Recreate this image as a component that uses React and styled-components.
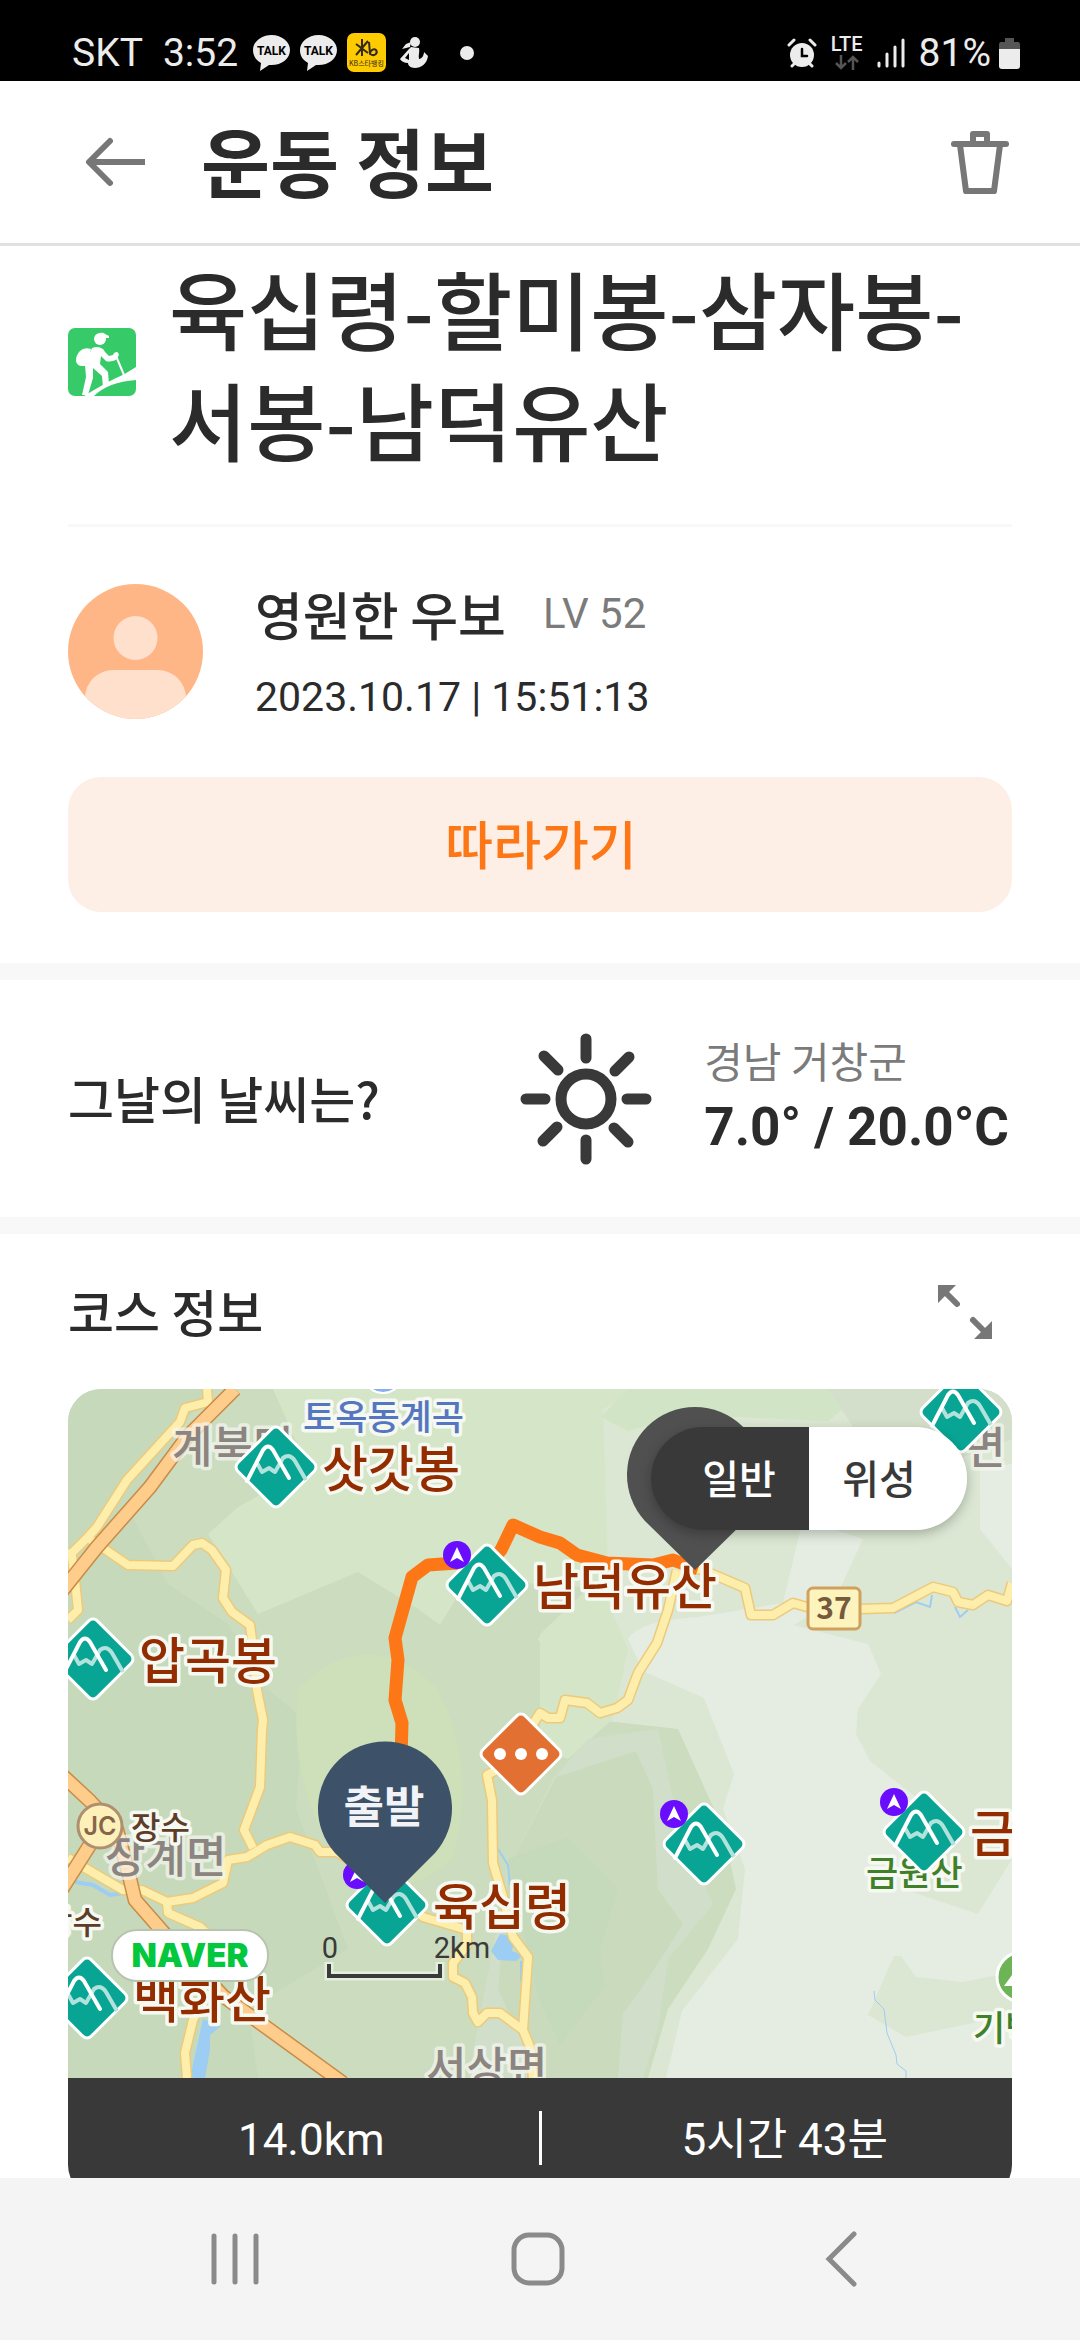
import React, { useState } from 'react';
import styled, { createGlobalStyle } from 'styled-components';

const peaks = [
    { x: 208, y: 78, name: '삿갓봉' },
    { x: 25, y: 270, name: '압곡봉' },
    { x: 419, y: 196, name: '남덕유산', flag: true },
    { x: 893, y: 23 },
    { x: 319, y: 516, name: '육십령', flag: true },
    { x: 19, y: 609, name: '백화산' },
    { x: 636, y: 455, flag: true },
    { x: 856, y: 443, name: '금원산', flag: true },
];

const localRoads = [
    '139,0 140,13 117,19 112,33 59,91 29,138 19,149 0,168',
    '3,160 7,191 10,221 0,231',
    '20,149 35,159 60,176 105,177 125,156 134,154 144,161 158,181 155,209 164,223 182,236 185,258 189,301 195,331 194,341 192,398 176,441 185,459',
    '0,469 55,501 74,501 99,513 125,509 155,494 160,471 179,468 199,456 222,448 247,456 252,463 269,463 310,490 355,528 399,541 399,556 385,574 385,588 397,594 404,608 405,624 410,633 419,624 432,624 455,641 462,658 465,689',
    '99,513 100,524 132,538 145,550 140,600 125,631 117,664 119,689',
    '609,181 600,221 589,254 570,284 560,311 549,319 532,324 519,314 497,311 492,329 480,329 472,324 440,375 419,386 424,411 425,474 435,508 445,548 460,568 455,641',
    '620,178 635,181 677,199 683,226 705,226 725,214 739,218 792,220 825,219 865,198 885,203 890,213 905,216 920,206 939,212 944,194',
];

const highways = [
    '167,0 119,48 82,98 29,158 -6,202',
    '-6,386 22,412 49,441 62,490 67,511 95,543 155,607 275,694',
    '-6,500 25,451',
];

const route = '333,370 334,334 327,311 330,271 327,249 344,188 360,176 389,174 418,178 433,161 445,136 472,148 492,154 509,166 539,174 585,176 605,171 630,180';

function StatusBar() {
    return (
        <Status>
            <StatusGroup>
                <span>SKT</span>
                <span>3:52</span>
            </StatusGroup>
            <StatusIcons>
                <TalkIcon />
                <TalkIcon />
                <svg width="39" height="39" viewBox="0 0 39 39">
                    <rect width="39" height="39" rx="7" fill="#fecb00" />
                    <path d="M9 11l12 9M21 8L9 22M15 6v17M22 9l1 12c5 3 8-1 6-4-2-2-5 0-6 3" stroke="#33291c" strokeWidth="2" fill="none" />
                    <text x="19.5" y="33" textAnchor="middle" fontSize="7" fontFamily="Noto Sans CJK KR" fill="#33291c">KB스타뱅킹</text>
                </svg>
                <svg width="32" height="32" viewBox="-4 0 32 32" fill="#ececec">
                    <circle cx="15" cy="5" r="5" />
                    <path d="M11 5L6 7l-4 5 8-2z" />
                    <path d="M11 10l8 1c1 4-1 7 0 11 3 0 5-4 5-7l4 4c-1 8-7 12-13 12-5 0-7-3-7-5-4 0-7-2-8-4l9-10z" />
                    <path d="M9 16l-4 5 4 2z" fill="#000" />
                </svg>
            </StatusIcons>
            <Dot />
            <StatusRight>
                <svg width="30" height="30" viewBox="0 0 30 30" fill="none" stroke="#ececec" strokeWidth="3" strokeLinecap="round">
                    <circle cx="15" cy="17" r="12" fill="#ececec" stroke="none" />
                    <path d="M2 7l5-5M28 7l-5-5M5 28l3-3M25 28l-3-3" />
                    <path d="M15 11v7h5" stroke="#000" strokeWidth="2.5" />
                </svg>
                <Lte>
                    LTE
                    <svg width="24" height="15" viewBox="0 0 24 15" fill="none" stroke="#555" strokeWidth="2.5">
                        <path d="M6 0v13M1 8l5 5 5-5M18 15V2M13 7l5-5 5 5" />
                    </svg>
                </Lte>
                <svg width="28" height="30" viewBox="0 0 28 30" stroke="#ececec" strokeWidth="3" strokeLinecap="round">
                    <path d="M2 25v3M10 16v12M18 9v19M26 2v26" />
                </svg>
                <span>81%</span>
                <svg width="21" height="32" viewBox="0 0 21 32">
                    <path d="M6 1h9v4h4q2 0 2 3v4H0V8q0-3 2-3h4z" fill="#555" />
                    <path d="M0 12h21v17q0 3-3 3H3q-3 0-3-3z" fill="#ececec" />
                </svg>
            </StatusRight>
        </Status>
    );
}

function TalkIcon() {
    return (
        <svg width="37" height="36" viewBox="0 0 37 36">
            <path d="M18.500 0C8 0 0 7 0 15c0 6 3 10 8 13L7 36l9-6C28 31 37 24 37 15 37 7 29 0 18.500 0z" fill="#ececec" />
            <text x="18.500" y="20" textAnchor="middle" fontSize="12" fontWeight="700" fontFamily="Roboto, sans-serif">TALK</text>
        </svg>
    );
}

function Peak({ x, y, flag }) {
    return (
        <g transform={`translate(${x} ${y})`}>
            <rect x="-30" y="-30" width="60" height="60" rx="6" transform="rotate(45)" fill="#08a595" stroke="#fff" strokeWidth="3" />
            <path d="M-19-4L-14 5-7 1-1 5 7-9Q14-14 19-6L30 13" fill="none" stroke="#b2e2dc" strokeWidth="4" strokeLinejoin="round" />
            <path d="M-29 14L-13-17Q-8-24-3-17L13 11" fill="none" stroke="#fff" strokeWidth="4" strokeLinecap="round" />
            {flag && (
                <g transform="translate(-30 -30)">
                    <circle r="14" fill="#6a0dff" />
                    <path d="M0-8L7 7 0 3-7 7z" fill="#fff" />
                </g>
            )}
        </g>
    );
}

function CourseMap() {
    return (
        <MapCanvas viewBox="0 0 944 689" preserveAspectRatio="xMidYMid slice">
            <rect width="944" height="689" fill="#cbdcbf" />
            <path d="M0 0H140L60 120 100 195 160 235 200 300 235 330 228 420 280 560 180 620 190 689H0z" fill="#c6dabb" />
            <path d="M205 0H580L540 200 400 190 372 236 350 220 290 183 190 225 140 145 170 118 240 80z" fill="#d4e5c8" />
            <path d="M230 300Q300 230 370 300Q410 380 385 470Q330 520 270 470Q220 400 230 300z" fill="#cde0ba" />
            <path d="M535 20L570 0H944V689H580L600 620 640 560 668 500 655 440 610 340 520 330 470 250 540 180z" fill="#dbe7d3" />
            <path d="M533 28L560 0H800L760 32 620 26 560 42z" fill="#d1e4c5" />
            <path d="M472 245L530 190 560 260 545 330 500 370 472 360z" fill="#d4e5c8" />
            <path d="M520 350L590 340 605 410 625 470 645 515 600 570 590 640 575 689H400L440 480 485 390z" fill="#d1dfca" />
            <path d="M488 388L568 362 585 400 590 500 615 535 580 590 555 625 550 689H470L430 600 440 480z" fill="#cadbbd" />
            <path d="M440 470L500 448 550 500 532 560 536 598 492 656 470 608z" fill="#c5dabb" />
            <path d="M760 0H944V50L890 70 800 60z" fill="#d3dfcb" />
            <path d="M560 250Q570 232 630 228L715 214 735 130 795 150 765 215 725 236 800 255 813 285 790 320 788 345 802 372 850 410 835 500 910 525 944 470V689H598L614 622 670 550 677 480 655 420 666 385 636 309 575 282z" fill="#e5ede2" />
            <path d="M912 80L944 75V180L912 140z" fill="#e5ede2" />
            <path d="M826 567H833L848 588 895 593 944 583V626L838 648 800 626z" fill="#dbe7d3" />

            <g fill="#9dcdf3">
                <path d="M135 630L153 637 142 646V661L137 689H122z" />
                <path d="M432 545L447 548 444 562 455 566 448 572 430 571 423 562z" />
            </g>
            <g fill="none" stroke="#9dcdf3" strokeWidth="2">
                <path d="M7 493L25 496 42 506 57 504" strokeWidth="4" />
                <path d="M806 602L807 611 816 620 819 644 828 666 829 675 838 682V689" strokeWidth="1" />
                <path d="M826 224L848 213 862 218 864 206M887 218L892 228 900 221M453 572L453 592M430 460L440 476 442 496" />
            </g>

            <g fill="none" strokeLinejoin="round">
                {localRoads.map((p) => <polyline key={p} points={p} stroke="#ecca7c" strokeWidth="11" />)}
                {localRoads.map((p) => <polyline key={p} points={p} stroke="#feeeab" strokeWidth="8" />)}
                {highways.map((p) => <polyline key={p} points={p} stroke="#c98b45" strokeWidth="15" />)}
                {highways.map((p) => <polyline key={p} points={p} stroke="#fecd8c" strokeWidth="12" />)}
                <polyline points={route} stroke="#fd7716" strokeWidth="13" />
            </g>

            <PlaceName x="104" y="74">계북면</PlaceName>
            <PlaceName x="897" y="75">면</PlaceName>
            <PlaceName x="37" y="484">장계면</PlaceName>
            <PlaceName x="358" y="695">서상면</PlaceName>
            <circle cx="315" cy="-16" r="20" fill="#8aaef0" stroke="#fff" strokeWidth="2" />
            <SpotName x="235" y="41" color="#5576c0">토옥동계곡</SpotName>
            <SpotName x="798" y="497" color="#40802a">금원산</SpotName>
            <SpotName x="905" y="652" color="#40802a">기백산</SpotName>
            <ExitName x="63" y="450">장수</ExitName>
            <ExitName x="-25" y="545">장수</ExitName>

            <circle cx="32" cy="437" r="22" fill="#fdf0b8" stroke="#ae9070" strokeWidth="3" />
            <JunctionText x="32" y="446">JC</JunctionText>
            <rect x="740" y="199" width="52" height="41" rx="5" fill="#fdf3bc" stroke="#cfa15e" strokeWidth="3" />
            <RoadNumber x="766" y="230">37</RoadNumber>

            {peaks.map((p) => <Peak key={`${p.x}-${p.y}`} {...p} />)}
            {peaks.filter((p) => p.name).map((p) => (
                <PeakName key={p.x} x={p.x + 46} y={p.y + 20}>{p.name}</PeakName>
            ))}

            <g transform="translate(453 365)">
                <rect x="-30" y="-30" width="60" height="60" rx="6" transform="rotate(45)" fill="#e37033" stroke="#fff" strokeWidth="3" />
                <g fill="#fff">
                    <circle cx="-21" r="6" />
                    <circle r="6" />
                    <circle cx="21" r="6" />
                </g>
            </g>
            <g transform="translate(954 588)">
                <circle r="25" fill="#6cb455" stroke="#fff" strokeWidth="3" />
                <path d="M-18 9L0-16 18 9z" fill="#fff" />
            </g>

            <path d="M317 514L267 464A67 67 0 1 1 367 464z" fill="#3d5168" />
            <PinText x="316" y="434">출발</PinText>
            <path d="M627 181L577 132A68 68 0 1 1 677 132z" fill="#505050" />

            <rect x="44" y="541" width="156" height="51" rx="25" fill="#fff" stroke="#b8c4b0" strokeWidth="2" />
            <NaverText x="122" y="578">NAVER</NaverText>

            <g fill="none">
                <path d="M261 573V587H372V573" stroke="#e4eede" strokeWidth="9" />
                <path d="M261 575V587H372V575" stroke="#3a3a3a" strokeWidth="4" />
            </g>
            <ScaleText x="262" y="569">0</ScaleText>
            <ScaleText x="394" y="569">2km</ScaleText>
        </MapCanvas>
    );
}

function HikeIcon() {
    return (
        <svg width="68" height="68" viewBox="0 0 68 68">
            <clipPath id="hike"><rect width="68" height="68" rx="7" /></clipPath>
            <g clipPath="url(#hike)" fill="#fff">
                <rect width="68" height="68" fill="#36cb68" />
                <circle cx="32" cy="11" r="6" />
                <path d="M31 5q5-1 6 1l4 2v2h-7z" />
                <path d="M23 21Q16 19 12 23 8 27 8 33q1 5 6 5h6z" />
                <path d="M24 20q5-2 9 0 3 1 4 4l4 4 4-1q1-3 4-3 3 2 1 5-2 4-6 4-4 1-6 0l-5-5-1 8 8 8 1 12-6 4-1-12-9-8v10l-5 17h-6l4-18-1-12z" />
                <path d="M48 28l8 19" stroke="#fff" strokeWidth="2" />
                <path d="M16 68Q34 57 46 51 58 46 68 39V52Q40 54 26 68z" />
            </g>
        </svg>
    );
}

function App() {
    const [layer, setLayer] = useState('normal');

    return (
        <Screen>
            <GlobalStyle />
            <StatusBar />
            <Header>
                <IconButton aria-label="뒤로">
                    <svg width="60" height="50" viewBox="0 0 60 50" fill="none" stroke="#777" strokeWidth="6" strokeLinecap="round" strokeLinejoin="round">
                        <path d="M25 4L4 25l21 21" />
                        <path d="M4 25h56" strokeLinecap="butt" />
                    </svg>
                </IconButton>
                <h1>운동 정보</h1>
                <IconButton aria-label="삭제">
                    <svg width="58" height="64" viewBox="0 0 58 64" fill="none" stroke="#777" strokeWidth="6" strokeLinejoin="round">
                        <path d="M3 14h52" strokeLinecap="round" />
                        <path d="M22 12V4h14v8M9 15l6 46h28l6-46" />
                    </svg>
                </IconButton>
            </Header>

            <Content>
                <Summary>
                    <TitleRow>
                        <HikeIcon />
                        <h2>육십령-할미봉-삼자봉-서봉-남덕유산</h2>
                    </TitleRow>
                    <UserRow>
                        <svg width="135" height="135" viewBox="0 0 135 135">
                            <clipPath id="avatar"><circle cx="67.500" cy="67.500" r="67.500" /></clipPath>
                            <g clipPath="url(#avatar)">
                                <rect width="135" height="135" fill="#ffb686" />
                                <circle cx="67.500" cy="54" r="22" fill="#ffe0cd" />
                                <rect x="17" y="86" width="101" height="80" rx="28" fill="#ffe0cd" />
                            </g>
                        </svg>
                        <UserInfo>
                            <UserName>
                                영원한 우보 <Level>LV 52</Level>
                            </UserName>
                            <RecordDate>2023.10.17 | 15:51:13</RecordDate>
                        </UserInfo>
                    </UserRow>
                    <FollowButton>따라가기</FollowButton>
                </Summary>

                <Weather>
                    <SectionTitle>그날의 날씨는?</SectionTitle>
                    <WeatherInfo>
                        <svg width="132" height="132" viewBox="-66 -66 132 132" fill="none" stroke="#393939" strokeWidth="11" strokeLinecap="round">
                            <circle r="25" />
                            <path d="M0-60V-41M0 60V41M-60 0H-41M60 0H41M-42-43L-28-29M43-42L29-28M-43 42L-29 28M42 43L28 29" />
                        </svg>
                        <WeatherText>
                            <Region>경남 거창군</Region>
                            <Temperature>7.0° / 20.0°C</Temperature>
                        </WeatherText>
                    </WeatherInfo>
                </Weather>

                <Course>
                    <CourseHead>
                        <SectionTitle>코스 정보</SectionTitle>
                        <IconButton aria-label="지도 확대">
                            <svg width="56" height="56" viewBox="0 0 56 56" fill="#777" stroke="#777" strokeLinecap="round">
                                <path d="M1 1h18l-5 5-8 8-5 5zM55 55H37l5-5 8-8 5-5z" stroke="none" />
                                <path d="M8 8l12 12M48 48L36 36" strokeWidth="6" />
                            </svg>
                        </IconButton>
                    </CourseHead>
                    <MapCard>
                        <CourseMap />
                        <LayerToggle>
                            <LayerButton $active={layer === 'normal'} onClick={() => setLayer('normal')}>일반</LayerButton>
                            <LayerButton $active={layer === 'satellite'} onClick={() => setLayer('satellite')}>위성</LayerButton>
                        </LayerToggle>
                        <CourseStats>
                            <Stat>14.0km</Stat>
                            <StatDivider />
                            <Stat>5시간 43분</Stat>
                        </CourseStats>
                    </MapCard>
                </Course>
            </Content>

            <NavBar>
                <NavButton aria-label="최근 앱">
                    <svg width="48" height="54" viewBox="0 0 48 54" stroke="#8a8a8a" strokeWidth="5" strokeLinecap="round">
                        <path d="M3 4v46M24 4v46M45 4v46" />
                    </svg>
                </NavButton>
                <NavButton aria-label="홈">
                    <svg width="54" height="54" viewBox="0 0 54 54" fill="none" stroke="#8a8a8a" strokeWidth="5">
                        <rect x="3" y="3" width="48" height="48" rx="15" />
                    </svg>
                </NavButton>
                <NavButton aria-label="이전">
                    <svg width="32" height="56" viewBox="0 0 32 56" fill="none" stroke="#8a8a8a" strokeWidth="5" strokeLinecap="round">
                        <path d="M29 3L4 28l25 25" />
                    </svg>
                </NavButton>
            </NavBar>
        </Screen>
    );
}

export default App;

const kr = `'Noto Sans CJK KR', sans-serif`;
const digits = `Roboto, 'Noto Sans CJK KR', sans-serif`;

const GlobalStyle = createGlobalStyle`
    * {
        box-sizing: border-box;
        margin: 0;
        padding: 0;
    }
    body {
        background: #fff;
        color: #2b2b2b;
        font-family: ${kr};
    }
    button {
        border: 0;
        background: none;
        color: inherit;
        font-family: inherit;
        cursor: pointer;
    }
    svg {
        display: block;
        flex-shrink: 0;
    }
`

const Screen = styled.div`
    display: flex;
    flex-direction: column;
    height: 100vh;
    overflow: hidden;
`

const Status = styled.div`
    display: flex;
    align-items: center;
    flex-shrink: 0;
    height: 81px;
    padding: 24px 60px 0 72px;
    background: #000;
    color: #ececec;
    font-family: Roboto, sans-serif;
    font-size: 39px;
`

const StatusGroup = styled.div`
    display: flex;
    gap: 20px;
`

const StatusIcons = styled.div`
    display: flex;
    align-items: center;
    gap: 10px;
    margin-left: 15px;
`

const Dot = styled.i`
    width: 14px;
    height: 14px;
    margin-left: 32px;
    border-radius: 50%;
    background: #ececec;
`

const StatusRight = styled.div`
    display: flex;
    align-items: center;
    gap: 14px;
    margin-left: auto;

    svg:last-child {
        margin-left: -6px;
    }
`

const Lte = styled.div`
    display: flex;
    flex-direction: column;
    align-items: center;
    gap: 2px;
    font-size: 20px;
    font-weight: 500;
    line-height: 18px;

    && svg {
        margin: 0;
    }
`

const Header = styled.header`
    display: flex;
    align-items: center;
    flex-shrink: 0;
    height: 165px;
    padding: 0 71px 0 85px;
    border-bottom: 3px solid #e1e1e1;

    h1 {
        flex: 1;
        margin-left: 56px;
        padding-bottom: 4px;
        font-size: 75px;
        font-weight: 700;
        line-height: 100px;
    }
`

const IconButton = styled.button`
    display: flex;
`

const Content = styled.main`
    flex: 1;
    min-height: 0;
    overflow: hidden;
`

const Summary = styled.section`
    padding: 5px 68px 51px;
`

const TitleRow = styled.div`
    display: flex;
    align-items: center;
    gap: 33px;
    padding-bottom: 51px;
    border-bottom: 3px solid #f8f8f8;

    h2 {
        font-size: 85px;
        font-weight: 500;
        line-height: 111px;
        word-break: keep-all;
    }
`

const UserRow = styled.div`
    display: flex;
    gap: 52px;
    padding: 57px 0 58px;
`

const UserInfo = styled.div`
    display: flex;
    flex-direction: column;
    justify-content: space-between;
    height: 135px;
`

const UserName = styled.p`
    display: flex;
    align-items: center;
    gap: 37px;
    font-size: 52px;
    font-weight: 500;
    line-height: 60px;
`

const Level = styled.span`
    color: #7b7b7b;
    font-family: ${digits};
    font-size: 42px;
    font-weight: 400;
`

const RecordDate = styled.p`
    font-family: ${digits};
    font-size: 41px;
    line-height: 44px;
`

const FollowButton = styled.button`
    width: 100%;
    height: 135px;
    padding: 0 0 4px 2px;
    border-radius: 33px;
    background: #feefe6;
    color: #fd7716;
    font-size: 52px;
    font-weight: 500;
`

const Weather = styled.section`
    display: flex;
    align-items: center;
    justify-content: space-between;
    height: 271px;
    padding: 0 71px 0 68px;
    border-top: 17px solid #f8f8f8;
    border-bottom: 17px solid #f8f8f8;
`

const SectionTitle = styled.h3`
    padding-bottom: 4px;
    font-size: 50px;
    font-weight: 500;
    line-height: 70px;
`

const WeatherInfo = styled.div`
    display: flex;
    align-items: center;
    gap: 52px;
`

const WeatherText = styled.div`
    padding-bottom: 8px;
`

const Region = styled.p`
    color: #7b7b7b;
    font-size: 42px;
    line-height: 64px;
`

const Temperature = styled.p`
    font-family: ${digits};
    font-size: 53px;
    font-weight: 700;
    line-height: 70px;
`

const Course = styled.section`
    padding: 0 68px;
`

const CourseHead = styled.div`
    display: flex;
    align-items: center;
    justify-content: space-between;
    height: 155px;
    padding-right: 19px;
`

const MapCard = styled.div`
    position: relative;
    overflow: hidden;
    border-radius: 33px;
`

const MapCanvas = styled.svg`
    width: 100%;
    height: 689px;
`

const MapLabel = styled.text`
    font-family: ${kr};
    font-weight: 500;
    paint-order: stroke;
    stroke: #f6f8f2;
    stroke-width: 7px;
    stroke-linejoin: round;
`

const PeakName = styled(MapLabel)`
    fill: #932d00;
    font-size: 50px;
`

const PlaceName = styled(MapLabel)`
    fill: #8c8481;
    stroke: rgba(246, 248, 242, 0.7);
    font-size: 44px;
`

const SpotName = styled(MapLabel)`
    fill: ${props => props.color};
    font-size: 35px;
`

const ExitName = styled(MapLabel)`
    fill: #5c3d27;
    font-size: 32px;
`

const JunctionText = styled.text`
    fill: #85664a;
    font-family: Inter, sans-serif;
    font-size: 25px;
    font-weight: 600;
    text-anchor: middle;
`

const RoadNumber = styled.text`
    fill: #765a3c;
    font-family: ${kr};
    font-size: 30px;
    font-weight: 700;
    text-anchor: middle;
`

const PinText = styled.text`
    fill: #f1f3f6;
    font-family: ${kr};
    font-size: 44px;
    font-weight: 700;
    text-anchor: middle;
`

const NaverText = styled.text`
    fill: #03c73c;
    font-family: Inter, sans-serif;
    font-size: 33px;
    font-weight: 900;
    text-anchor: middle;
`

const ScaleText = styled.text`
    fill: #3a3a3a;
    font-family: Roboto, sans-serif;
    font-size: 29px;
    text-anchor: middle;
`

const LayerToggle = styled.div`
    position: absolute;
    top: 38px;
    right: 45px;
    display: flex;
    overflow: hidden;
    border-radius: 52px;
    box-shadow: 0 4px 12px rgba(0, 0, 0, 0.25);
`

const LayerButton = styled.button`
    width: 158px;
    height: 103px;
    padding: 0 0 4px 18px;
    background: ${props => props.$active ? '#393939' : '#fff'};
    color: ${props => props.$active ? '#fff' : '#393939'};
    font-size: 40px;
    font-weight: 500;

    & + & {
        padding: 0 18px 4px 0;
    }
`

const CourseStats = styled.div`
    display: flex;
    align-items: center;
    height: 120px;
    background: #393939;
    color: #fff;
`

const Stat = styled.p`
    flex: 1;
    padding: 4px 0 0 16px;
    font-family: ${digits};
    font-size: 44px;
    line-height: 70px;
    text-align: center;
`

const StatDivider = styled.i`
    width: 3px;
    height: 54px;
    background: #fff;
`

const NavBar = styled.nav`
    display: flex;
    flex-shrink: 0;
    height: 162px;
    padding: 0 88px 0 84px;
    background: #f4f4f4;
`

const NavButton = styled.button`
    display: flex;
    flex: 1;
    align-items: center;
    justify-content: center;
`
